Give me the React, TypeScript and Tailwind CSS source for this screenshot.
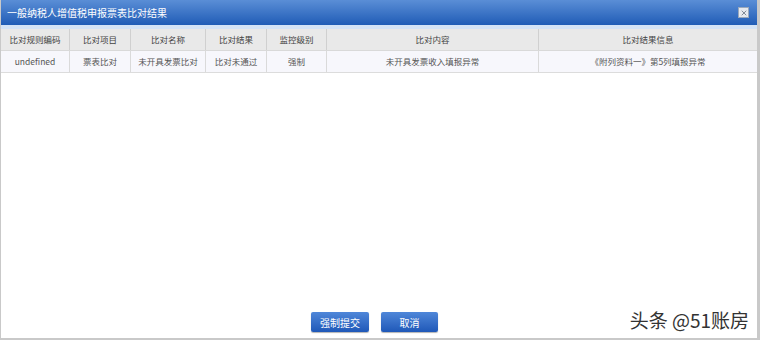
import { X } from "lucide-react";

const cols = [
  { h: "比对规则编码", v: "undefined", w: "w-[69px]" },
  { h: "比对项目", v: "票表比对", w: "w-[61px]" },
  { h: "比对名称", v: "未开具发票比对", w: "w-[75px]" },
  { h: "比对结果", v: "比对未通过", w: "w-[61px]" },
  { h: "监控级别", v: "强制", w: "w-[60px]" },
  { h: "比对内容", v: "未开具发票收入填报异常", w: "w-[212px]" },
  { h: "比对结果信息", v: "《附列资料一》第5列填报异常", w: "flex-1" },
];

export default function App() {
  return (
    <div
      className="flex h-[340px] w-[760px] flex-col bg-white"
      style={{ fontFamily: '"Microsoft YaHei", "Noto Sans CJK SC", sans-serif' }}
    >
      <div className="flex h-[340px] flex-col border-b-[2px] border-l border-r-[3px] border-[#c9c9c9]">
        {/* 标题栏 */}
        <div className="flex h-[25px] items-center justify-between bg-gradient-to-b from-[#5a8ed6] to-[#1f5cb6] pl-[6px] pr-[8px]">
          <span className="text-[10px] text-white">一般纳税人增值税申报票表比对结果</span>
          <span className="flex h-[11px] w-[11px] items-center justify-center border border-[#9aa8bb] bg-[#e6e9ee]">
            <X size={8} strokeWidth={2.5} className="text-[#6b7686]" />
          </span>
        </div>
        <div className="h-[4px] bg-[#d3e3f6]" />

        {/* 表格 */}
        <div className="flex border-b border-[#d9d9d9] bg-[#e9e9e9]">
          {cols.map((c, i) => (
            <div
              key={c.h}
              className={`${c.w} flex h-[21px] items-center justify-center text-[8.5px] text-[#444] ${i < cols.length - 1 ? "border-r border-[#d0d0d0]" : ""}`}
            >
              {c.h}
            </div>
          ))}
        </div>
        <div className="flex border-b border-[#dcdcdc] bg-[#f7f7fc]">
          {cols.map((c, i) => (
            <div
              key={c.h}
              className={`${c.w} flex h-[21px] items-center justify-center text-[8.5px] text-[#555] ${i < cols.length - 1 ? "border-r border-[#dadada]" : ""}`}
            >
              {c.v}
            </div>
          ))}
        </div>

        <div className="flex-1" />

        {/* 底部按钮 */}
        <div className="relative flex h-[26px] items-start justify-center gap-[12px] pb-[5px] pr-[9px]">
          <button className="h-[20px] w-[58px] rounded-[2px] bg-gradient-to-b from-[#4f87d9] to-[#1f58b8] text-[10px] text-white shadow-[0_1px_1px_rgba(0,0,0,0.3)]">
            强制提交
          </button>
          <button className="h-[20px] w-[57px] rounded-[2px] bg-gradient-to-b from-[#4f87d9] to-[#1f58b8] text-[10px] text-white shadow-[0_1px_1px_rgba(0,0,0,0.3)]">
            取消
          </button>
          <span className="absolute right-[8px] top-[-6px] text-[19px] text-[#333]">头条 @51账房</span>
        </div>
      </div>
    </div>
  );
}
